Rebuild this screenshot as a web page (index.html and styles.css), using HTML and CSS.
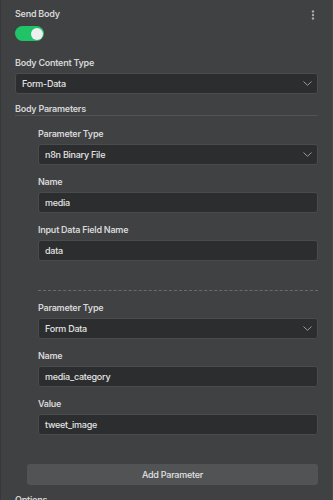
FILE: index.html
```html
<!DOCTYPE html>
<html>

<head>
    <title>Node Parameters</title>
    <link rel="stylesheet" href="styles.css">
</head>

<body>
    <div class="panel">
        <div class="param-head">
            <span class="label">Send Body</span>
            <svg class="kebab" width="4" height="10" viewBox="0 0 4 10">
                <circle cx="2" cy="1.5" r="1.2" fill="#a9aaac" />
                <circle cx="2" cy="5" r="1.2" fill="#a9aaac" />
                <circle cx="2" cy="8.5" r="1.2" fill="#a9aaac" />
            </svg>
        </div>
        <div class="toggle"><div class="knob"></div></div>

        <div class="field top-field">
            <div class="label">Body Content Type</div>
            <div class="input select">
                <span>Form-Data</span>
                <svg class="chevron" width="9" height="5" viewBox="0 0 9 5">
                    <path d="M0.5 0.5 L4.5 4.3 L8.5 0.5" fill="none" stroke="#9c9d9f" stroke-width="1" />
                </svg>
            </div>
        </div>

        <div class="collection">
            <div class="label collection-title">Body Parameters</div>

            <div class="item">
                <div class="field">
                    <div class="label">Parameter Type</div>
                    <div class="input select">
                        <span>n8n Binary File</span>
                        <svg class="chevron" width="9" height="5" viewBox="0 0 9 5">
                            <path d="M0.5 0.5 L4.5 4.3 L8.5 0.5" fill="none" stroke="#9c9d9f" stroke-width="1" />
                        </svg>
                    </div>
                </div>
                <div class="field">
                    <div class="label">Name</div>
                    <div class="input">media</div>
                </div>
                <div class="field">
                    <div class="label">Input Data Field Name</div>
                    <div class="input">data</div>
                </div>
            </div>

            <div class="item second">
                <div class="field">
                    <div class="label">Parameter Type</div>
                    <div class="input select">
                        <span>Form Data</span>
                        <svg class="chevron" width="9" height="5" viewBox="0 0 9 5">
                            <path d="M0.5 0.5 L4.5 4.3 L8.5 0.5" fill="none" stroke="#9c9d9f" stroke-width="1" />
                        </svg>
                    </div>
                </div>
                <div class="field">
                    <div class="label">Name</div>
                    <div class="input">media_category</div>
                </div>
                <div class="field">
                    <div class="label">Value</div>
                    <div class="input">tweet_image</div>
                </div>
            </div>

            <button class="add-button">Add Parameter</button>
        </div>

        <div class="label options">Options</div>
    </div>
</body>

</html>
```

FILE: styles.css
```css
body {
    margin: 0;
    background: #404143;
    font-family: Inter, "Noto Sans", sans-serif;
    letter-spacing: -0.25px;
    overflow: hidden;
}

.panel {
    min-height: 520px;
    padding: 8px 14px 0 14px;
    border-left: 1px solid #37383a;
    border-right: 1px solid #4a4b4d;
}

.label {
    font-size: 9px;
    line-height: 12px;
    font-weight: 600;
    color: #d6d6d7;
}

.param-head {
    display: flex;
    justify-content: space-between;
    align-items: center;
}

.kebab {
    margin-right: 3px;
    margin-top: 2px;
}

.toggle {
    width: 29px;
    height: 15px;
    border-radius: 8px;
    background: #20c467;
    margin-top: 6px;
    display: flex;
    justify-content: flex-end;
    align-items: center;
    padding: 0 1px;
    box-sizing: border-box;
}

.knob {
    width: 12px;
    height: 12px;
    border-radius: 50%;
    background: #eeeff1;
}

.field {
    margin-bottom: 11px;
}

.top-field {
    margin-top: 16px;
    margin-bottom: 9px;
}

.field .label {
    margin-bottom: 4px;
}

.input {
    height: 21px;
    box-sizing: border-box;
    background: #2c2d2f;
    border: 1px solid #4a4b4d;
    border-radius: 3px;
    padding: 0 6px;
    display: flex;
    align-items: center;
    justify-content: space-between;
    font-size: 9px;
    font-weight: 500;
    color: #e4e4e5;
}

.chevron {
    margin-right: -1px;
}

.collection-title {
    border-bottom: 1px solid #525355;
}

.item {
    display: flow-root;
    margin-left: 23px;
    padding-top: 12px;
}

.item.second {
    margin-top: 18px;
    padding-top: 11px;
    border-top: 1px dashed #6a6b6d;
}

.add-button {
    display: block;
    width: calc(100% - 12px);
    margin: 18px 0 0 12px;
    height: 21px;
    border: none;
    border-radius: 3px;
    background: #525355;
    color: #e2e2e3;
    font-family: Inter, "Noto Sans", sans-serif;
    font-size: 9px;
    font-weight: 500;
    letter-spacing: -0.25px;
}

.options {
    margin-top: 9px;
}
```
